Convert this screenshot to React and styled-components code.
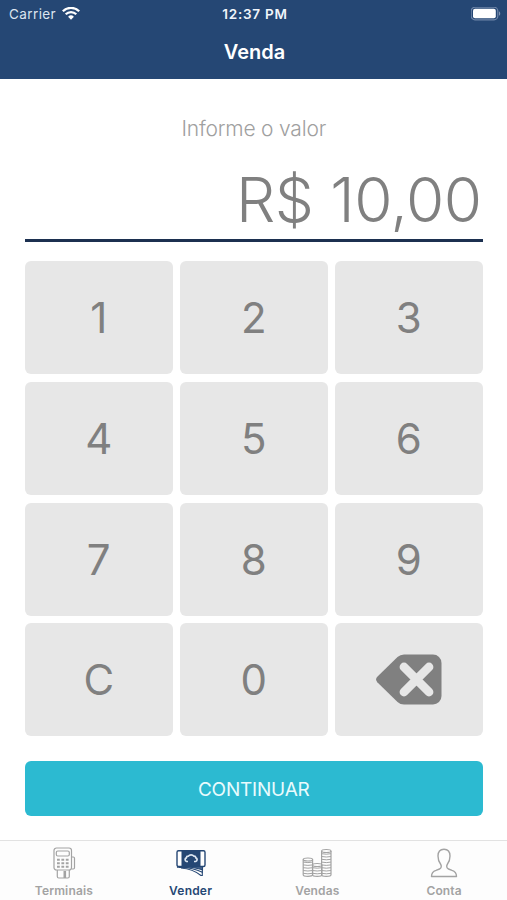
import React, { useState } from "react";
import styled, { createGlobalStyle } from "styled-components";

const GlobalStyle = createGlobalStyle`
  * {
    box-sizing: border-box;
  }
  body {
    margin: 0;
    background-color: #fff;
    font-family: Inter, "Liberation Sans", sans-serif;
  }
  button {
    border: none;
    padding: 0;
    font-family: inherit;
    cursor: pointer;
  }
  svg {
    display: block;
  }
`;

const Screen = styled.div`
  display: flex;
  flex-direction: column;
  width: 507px;
  height: 900px;
  overflow: hidden;
`;

const Header = styled.header`
  height: 79px;
  background-color: #254774;
  color: #fff;
`;

const StatusBar = styled.div`
  display: grid;
  grid-template-columns: 1fr auto 1fr;
  align-items: center;
  height: 27px;
  padding: 0 6px 0 9px;
  font-size: 13.5px;
  line-height: 16px;
`;

const Carrier = styled.div`
  display: flex;
  align-items: center;
  gap: 6px;
  color: #dce5ef;
  letter-spacing: 0.4px;
`;

const Clock = styled.div`
  color: #f1f5fa;
  font-weight: 600;
  letter-spacing: 0.75px;
`;

const Battery = styled.div`
  justify-self: end;
`;

const Title = styled.h1`
  margin: 13px 0 0;
  padding-left: 2px;
  font-size: 20px;
  font-weight: 600;
  line-height: 24px;
  text-align: center;
`;

const Content = styled.main`
  display: flex;
  flex-direction: column;
  height: 761px;
  padding: 37px 24.5px 0 25px;
`;

const Hint = styled.div`
  color: #a0a0a0;
  font-size: 21px;
  font-weight: 300;
  line-height: 26px;
  letter-spacing: -0.2px;
  text-align: center;
`;

const Amount = styled.div`
  height: 100px;
  padding: 20px 1px 0 0;
  border-bottom: 3px solid #1c3050;
  color: #808080;
  font-size: 62px;
  font-weight: 300;
  line-height: 75px;
  letter-spacing: -0.5px;
  text-align: right;
  white-space: nowrap;
`;

const Keypad = styled.div`
  display: grid;
  grid-template-columns: repeat(3, 1fr);
  grid-auto-rows: 113px;
  gap: 7.65px 7.5px;
  margin-top: 19.4px;
`;

const Key = styled.button`
  display: flex;
  align-items: center;
  justify-content: center;
  border-radius: 6px;
  background-color: #e7e7e7;
  color: #808080;
  font-size: 42px;
  font-weight: 400;
`;

const Continue = styled.button`
  height: 54.5px;
  margin-top: 24.7px;
  padding-top: 2px;
  border-radius: 6px;
  background-color: #2cbad1;
  color: #e9fbfd;
  font-size: 19px;
  font-weight: 400;
  letter-spacing: -0.2px;
`;

const TabBar = styled.nav`
  display: grid;
  grid-template-columns: repeat(4, 1fr);
  height: 60px;
  border-top: 1px solid #e2e2e2;
  background-color: #fdfdfd;
`;

const Tab = styled.button`
  display: flex;
  flex-direction: column;
  align-items: center;
  padding: 5px 0 0 1px;
  background: none;
  color: ${({ $active }) => ($active ? "#254774" : "#a3a3a3")};
  font-size: 12px;
  font-weight: 600;
  line-height: 15px;
  letter-spacing: ${({ $active }) => ($active ? "0.2px" : "0.15px")};
`;

const TabLabel = styled.span`
  margin-top: 3px;
`;

const WifiIcon = () => (
  <svg width="18" height="14" viewBox="0 0 18 14" fill="none" stroke="#fff">
    <path d="M0.8 4.3a11.6 11.6 0 0 1 16.4 0" strokeWidth="2.3" />
    <path d="M3.7 7.3a7.5 7.5 0 0 1 10.6 0" strokeWidth="2.2" />
    <path d="M9 12.8 6.1 9.8a4.1 4.1 0 0 1 5.8 0Z" fill="#fff" stroke="none" />
  </svg>
);

const BatteryIcon = () => (
  <svg width="30" height="14" viewBox="0 0 30 14">
    <rect
      x="0.2"
      y="0.2"
      width="26.6"
      height="12.6"
      rx="3.8"
      fill="none"
      stroke="#6f86a8"
      strokeWidth="1.2"
    />
    <rect x="2" y="1.8" width="22.8" height="9.4" rx="2" fill="#fff" />
    <path d="M28 4.2c1.7.8 1.7 3.8 0 4.6Z" fill="#8094b2" />
  </svg>
);

const BackspaceIcon = () => (
  <svg width="66" height="51" viewBox="0 0 66 51">
    <path
      d="M28 0.5H57a8.5 8.5 0 0 1 8.5 8.5V42a8.5 8.5 0 0 1-8.5 8.5H28q-3.8 0-6.5-2.6L1.3 28.2q-2.4-2.7 0-5.4L21.5 3.1Q24.2 0.5 28 0.5Z"
      fill="#808080"
    />
    <path
      d="M28 13 53 38M53 13 28 38"
      stroke="#e7e7e7"
      strokeWidth="8.8"
      strokeLinecap="round"
    />
  </svg>
);

const TerminalIcon = () => (
  <svg
    width="24"
    height="34"
    viewBox="0 0 24 34"
    fill="none"
    stroke="currentColor"
    strokeWidth="1.2"
  >
    <rect x="2" y="2" width="17.5" height="22" rx="2.5" />
    <rect x="4.3" y="5" width="13" height="5" rx="1.5" />
    <path d="M19.5 11h1.8q1.2 0 1.2 1.2v9.6q0 1.2-1.2 1.2h-1.8" />
    <path
      d="M5 13.7h2.8M9.4 13.7h2.8M13.8 13.7h2.8M5 17.2h2.8M9.4 17.2h2.8M13.8 17.2h2.8M5 20.7h2.8M9.4 20.7h2.8M13.8 20.7h2.8"
      strokeWidth="2"
    />
    <path d="M5.3 24v6.5q0 1.5 1.5 1.5h9q1.5 0 1.5-1.5V24" />
    <path d="M12.8 25v7" strokeWidth="2.6" />
  </svg>
);

const CashIcon = () => (
  <svg width="30" height="34" viewBox="0 0 30 34" fill="none">
    <g fill="#fff" stroke="#254774" strokeWidth="1.1">
      <path d="M5 22q12 1 20 7.500h1.300V20Z" />
      <path d="M3 21.500q13-.5 23.300 4.800V20Z" />
      <path d="M1.500 20v1.200q11-1.500 25 2.600V20Z" fill="#48658e" />
    </g>
    <rect
      x="1"
      y="4.7"
      width="28"
      height="15.8"
      rx="1.5"
      fill="#fff"
      stroke="#254774"
      strokeWidth="1.4"
    />
    <rect x="5.5" y="4.3" width="19" height="16.5" fill="#254774" />
    <path
      d="M12 15.5h-1.5a1.9 1.9 0 0 1-.2-3.6q.2-1.7 1.9-1.7a3.9 3.9 0 0 1 5.8 0q1.7 0 1.9 1.7a1.9 1.9 0 0 1-.2 3.6H18"
      stroke="#dce6f2"
      strokeWidth="1.7"
    />
  </svg>
);

// each stack is a pile of coins with a rounded cap
const coinStacks = [
  { x: 1.2, top: 12, coins: 5 },
  { x: 10.5, top: 17.5, coins: 3 },
  { x: 19.6, top: 3.5, coins: 8 },
];

const CoinsIcon = () => (
  <svg
    width="30"
    height="34"
    viewBox="0 0 30 34"
    fill="none"
    stroke="currentColor"
    strokeWidth="1.2"
  >
    {coinStacks.map(({ x, top, coins }) => (
      <g key={x}>
        <path
          d={`M${x} ${top + 1.5}V28.7q0 1.6 4.7 1.6t4.7-1.6V${top + 1.5}`}
        />
        <ellipse cx={x + 4.7} cy={top + 1.5} rx="4.7" ry="1.5" />
        {Array.from({ length: coins }, (_, i) => (
          <path
            key={i}
            d={`M${x} ${27.3 - i * 2.8}q4.7 1 9.4 0`}
            strokeWidth="1"
          />
        ))}
      </g>
    ))}
  </svg>
);

const PersonIcon = () => (
  <svg
    width="28"
    height="34"
    viewBox="0 0 28 34"
    fill="none"
    stroke="currentColor"
    strokeWidth="1.4"
    strokeLinejoin="round"
  >
    <path d="M1.5 30.5C1.5 27 3 25.3 6 24.3L9.5 23C11.5 22.3 11.8 20 10.5 18 8.7 15.7 8 13 8 10 8 5.5 10.5 3.2 14 3.2S20 5.5 20 10C20 13 19.3 15.7 17.5 18 16.2 20 16.5 22.3 18.5 23L22 24.3C25 25.3 26.5 27 26.5 30.5Z" />
  </svg>
);

const tabs = [
  { id: "terminais", label: "Terminais", Icon: TerminalIcon },
  { id: "vender", label: "Vender", Icon: CashIcon },
  { id: "vendas", label: "Vendas", Icon: CoinsIcon },
  { id: "conta", label: "Conta", Icon: PersonIcon },
];

const keys = ["1", "2", "3", "4", "5", "6", "7", "8", "9", "C", "0"];

const formatAmount = (cents) =>
  `R$ ${Math.floor(cents / 100)},${String(cents % 100).padStart(2, "0")}`;

const App = () => {
  const [cents, setCents] = useState(1000);
  const [selected, setSelected] = useState("vender");

  const handleKey = (key) => {
    if (key === "C") {
      setCents(0);
      return;
    }
    setCents((prev) => Math.min(prev * 10 + Number(key), 9999999));
  };

  return (
    <Screen>
      <GlobalStyle />
      <Header>
        <StatusBar>
          <Carrier>
            Carrier
            <WifiIcon />
          </Carrier>
          <Clock>12:37 PM</Clock>
          <Battery>
            <BatteryIcon />
          </Battery>
        </StatusBar>
        <Title>Venda</Title>
      </Header>
      <Content>
        <Hint>Informe o valor</Hint>
        <Amount>{formatAmount(cents)}</Amount>
        <Keypad>
          {keys.map((key) => (
            <Key key={key} onClick={() => handleKey(key)}>
              {key}
            </Key>
          ))}
          <Key
            aria-label="Apagar"
            onClick={() => setCents((prev) => Math.floor(prev / 10))}
          >
            <BackspaceIcon />
          </Key>
        </Keypad>
        <Continue>CONTINUAR</Continue>
      </Content>
      <TabBar>
        {tabs.map(({ id, label, Icon }) => (
          <Tab
            key={id}
            $active={selected === id}
            onClick={() => setSelected(id)}
          >
            <Icon />
            <TabLabel>{label}</TabLabel>
          </Tab>
        ))}
      </TabBar>
    </Screen>
  );
};

export default App;
